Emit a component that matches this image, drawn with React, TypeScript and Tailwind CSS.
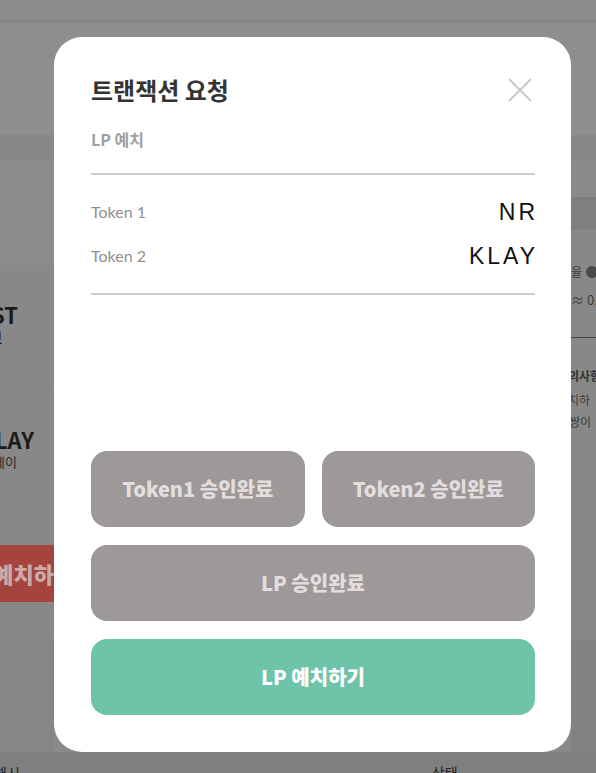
import React from "react";

const KR = '"Noto Sans CJK KR", "Noto Sans", sans-serif';

function CloseIcon() {
  return (
    <svg width="24" height="24" viewBox="0 0 24 24" className="block">
      <line x1="1" y1="1" x2="23" y2="23" stroke="#c9c9c9" strokeWidth="2" />
      <line x1="23" y1="1" x2="1" y2="23" stroke="#c9c9c9" strokeWidth="2" />
    </svg>
  );
}

function Background() {
  return (
    <div className="flex flex-col h-full" style={{ fontFamily: KR }}>
      <div className="h-[20px] bg-[#8d8d8d]" />
      <div className="h-[3px] bg-[#848484]" />
      <div className="h-[112px] bg-[#8e8e8e]" />
      <div className="h-[25px] bg-[#878787]" />
      <div className="flex flex-1 min-h-0">
        {/* left column */}
        <div className="w-[54px] flex flex-col overflow-hidden">
          <div className="h-[105px] bg-[#8c8c8c]" />
          <div className="h-[121px] bg-[#888888] relative flex flex-col items-end pr-[36px] pt-[34px]">
            <div className="text-[22px] font-bold leading-[30px] text-[#1c1c1c] whitespace-nowrap">TEST</div>
            <div className="text-[12px] leading-[16px] text-[#2a2a2a] underline whitespace-nowrap mr-[16px]">정보인</div>
          </div>
          <div className="h-[1px] bg-[#838383]" />
          <div className="h-[158px] bg-[#888888] flex flex-col items-end pr-[20px] pt-[37px]">
            <div className="text-[22px] font-bold leading-[30px] text-[#1c1c1c] whitespace-nowrap">KLAY</div>
            <div className="text-[13px] leading-[16px] text-[#2a2a2a] whitespace-nowrap mr-[17px]">클레이</div>
          </div>
          <div className="h-[57px] bg-[#a5443f] flex items-center overflow-hidden">
            <div className="text-[22px] font-black text-[#c9aaa6] whitespace-nowrap ml-[-40px] shrink-0">LP 예치하기</div>
          </div>
          <div className="h-[35px] bg-[#888888]" />
          <div className="flex-1 bg-[#868686]" />
        </div>
        <div className="flex-1 bg-[#8a8a8a]" />
        {/* right column */}
        <div className="w-[25px] flex flex-col overflow-hidden">
          <div className="h-[37px] bg-[#8a8a8a]" />
          <div className="h-[33px] bg-[#7f7f7f]" />
          <div className="flex-1 bg-[#888888] flex flex-col pt-[32px]">
            <div className="flex items-center gap-[4px] h-[20px] whitespace-nowrap">
              <span className="text-[12px] text-[#3a3a3a]">율</span>
              <span className="w-[12px] h-[12px] rounded-full bg-[#4a4a4a] shrink-0" />
            </div>
            <div className="h-[20px] mt-[8px] text-[13px] leading-[20px] text-[#3c3c3c] whitespace-nowrap">≈ 0.0</div>
            <div className="h-[1px] bg-[#444444] mt-[27px]" />
            <div className="mt-[29px] text-[12px] font-bold leading-[18px] text-[#333] whitespace-nowrap ml-[-3px]">의사항</div>
            <div className="mt-[6px] text-[12px] leading-[18px] text-[#3a3a3a] whitespace-nowrap ml-[-3px]">치하</div>
            <div className="mt-[4px] text-[12px] leading-[18px] text-[#3a3a3a] whitespace-nowrap ml-[-2px]">쌍이</div>
            <div className="flex-1" />
            <div className="h-[112px] bg-[#828282]" />
          </div>
        </div>
      </div>
      <div className="h-[21px] bg-[#7f7f7f] flex items-end overflow-hidden relative">
        <div className="text-[14px] leading-[14px] text-[#222] whitespace-nowrap ml-[-6px] mb-[-6px]">해시</div>
        <div className="text-[14px] leading-[14px] text-[#222] whitespace-nowrap ml-[412px] mb-[-6px]">상태</div>
      </div>
    </div>
  );
}

function Btn({ children, green }: { children: React.ReactNode; green?: boolean }) {
  return (
    <div
      className={
        "h-[76px] rounded-[16px] flex items-center justify-center text-[20px] font-black " +
        (green ? "bg-[#6ec4a8] text-white" : "bg-[#9e9999] text-[#e2dede]")
      }
    >
      {children}
    </div>
  );
}

export default function App() {
  return (
    <div className="relative w-[596px] h-[773px] overflow-hidden bg-[#8b8b8b]">
      <Background />
      <div
        className="absolute left-[54px] top-[37px] w-[517px] h-[715px] bg-white rounded-[28px] flex flex-col pl-[37px] pr-[36px] pt-[35px] pb-[37px]"
        style={{ fontFamily: KR }}
      >
        <div className="h-[36px] flex items-center justify-between">
          <div className="text-[24px] font-bold leading-[36px] text-[#333333]">트랜잭션 요청</div>
          <div className="mr-[3px]">
            <CloseIcon />
          </div>
        </div>
        <div className="mt-[19px] h-[24px] text-[16px] font-bold leading-[24px] text-[#a0a0a0]">LP 예치</div>
        <div className="mt-[22px] h-[2px] bg-[#cccccc]" />
        <div className="mt-[15px] flex flex-col">
          {[
            ["Token 1", "NR"],
            ["Token 2", "KLAY"],
          ].map(([k, v]) => (
            <div key={k} className="h-[44px] flex items-center justify-between">
              <span className="text-[16px] text-[#8f8f8f]" style={{ fontFamily: 'Lato, sans-serif' }}>
                {k}
              </span>
              <span
                className="text-[23px] text-[#111111] tracking-[3px] mr-[-3px]"
                style={{ fontFamily: '"Liberation Sans", Arial, sans-serif' }}
              >
                {v}
              </span>
            </div>
          ))}
        </div>
        <div className="mt-[15px] h-[2px] bg-[#cccccc]" />
        <div className="flex-1" />
        <div className="flex flex-col gap-[18px]">
          <div className="grid grid-cols-2 gap-[17px]">
            <Btn>Token1 승인완료</Btn>
            <Btn>Token2 승인완료</Btn>
          </div>
          <Btn>LP 승인완료</Btn>
          <Btn green>LP 예치하기</Btn>
        </div>
      </div>
    </div>
  );
}
